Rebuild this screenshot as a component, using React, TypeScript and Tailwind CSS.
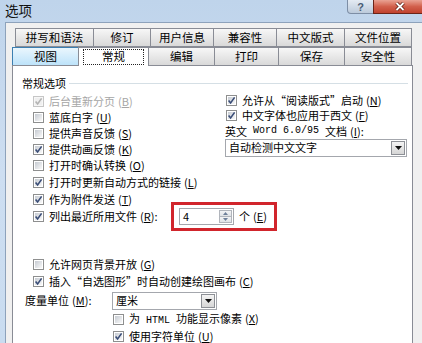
import React from "react";

function Box({ checked, disabled }: { checked?: boolean; disabled?: boolean }) {
  return (
    <span
      className={`relative block h-[11px] w-[11px] shrink-0 border p-px ${
        disabled ? "border-[#c6c6c6] bg-[#f7f7f7]" : "border-[#8e8f8f] bg-white"
      }`}
    >
      <span
        className={`block h-full w-full ${
          disabled ? "bg-[#efefef]" : "bg-gradient-to-br from-[#c6cbd2] to-[#f9f9f9]"
        }`}
      />
      {checked && (
        <svg className="absolute left-0 top-0" width="9" height="9" viewBox="0 0 9 9">
          <path
            d="M1.6 4.4 L3.6 6.9 L7.6 1.4"
            fill="none"
            stroke={disabled ? "#b3b3b3" : "#3a4d77"}
            strokeWidth="1.6"
          />
        </svg>
      )}
    </span>
  );
}

function Hot({ k }: { k: string }) {
  return (
    <span className="ml-[3px]">
      (<span className="underline underline-offset-[1px]">{k}</span>)
    </span>
  );
}

function Check({
  children,
  hot,
  checked,
  disabled,
  h = "h-[17px]",
}: {
  children: React.ReactNode;
  hot: string;
  checked?: boolean;
  disabled?: boolean;
  h?: string;
}) {
  return (
    <div className={`flex items-center gap-[5px] whitespace-nowrap ${h}`}>
      <Box checked={checked} disabled={disabled} />
      <span className={disabled ? "text-[#a6a6a6]" : "text-black"}>
        {children}
        <Hot k={hot} />
      </span>
    </div>
  );
}

function Tab({
  label,
  w,
  first,
  state,
  front,
}: {
  label: string;
  w: string;
  first?: boolean;
  state?: "hover" | "selected";
  front?: boolean;
}) {
  let look = "border border-[#898c95] bg-gradient-to-b from-[#f7f7f7] to-[#d9d9d9]";
  if (state === "hover")
    look = "relative z-10 border border-[#3c7fb1] bg-gradient-to-b from-[#eaf6fd] to-[#bde3fa]";
  if (state === "selected")
    look = "relative z-20 border border-b-0 border-[#898c95] bg-white h-[19px] -mb-px";
  return (
    <div
      className={`flex items-center justify-center text-[11.5px] text-black ${w} ${
        first ? "" : "-ml-px"
      } ${front ? "h-[18px] border-b-0" : "h-[19px]"} ${look}`}
    >
      {state === "selected" && (
        <span className="absolute inset-x-[4px] top-[1px] bottom-[1px] border border-dotted border-[#222]" />
      )}
      <span className="relative">{label}</span>
    </div>
  );
}

function Combo({ w, text }: { w: string; text: string }) {
  return (
    <div className={`flex h-[18px] items-center border border-[#a4a7ad] bg-white ${w}`}>
      <span className="flex-1 pl-[3px] text-black">{text}</span>
      <span className="mr-px flex h-[14px] w-[14px] items-center justify-center border border-[#8d9096] bg-gradient-to-b from-[#f4f4f4] to-[#d6d6d6]">
        <svg width="7" height="4" viewBox="0 0 7 4">
          <path d="M0 0 H7 L3.5 4 Z" fill="#111" />
        </svg>
      </span>
    </div>
  );
}

export default function App() {
  return (
    <div className="relative flex h-[343px] w-[422px] flex-col overflow-hidden bg-gradient-to-b from-[#bfd4eb] via-[#cddef1] to-[#c9dcf0] font-['Noto_Sans_CJK_SC','Noto_Sans',sans-serif] text-[11px] leading-none">
      {/* title bar */}
      <div className="flex h-[22px] shrink-0 items-start justify-between">
        <span className="pl-[5px] pt-[4px] text-[13.5px] text-[#111]">选项</span>
        <div className="-mr-[4px] flex">
          <div className="flex h-[14px] w-[27px] items-start justify-center rounded-bl-[4px] border border-t-0 border-[#7d8ea5] bg-gradient-to-b from-[#e4ebf3] to-[#bccadb] pt-px font-['Liberation_Sans',sans-serif] text-[11px] leading-[12px] font-bold text-[#4a5c74]">
            ?
          </div>
          <div className="-ml-px flex h-[14px] w-[53px] items-center justify-center rounded-br-[4px] border border-t-0 border-[#6b2418] bg-gradient-to-b from-[#e9a293] via-[#d2604c] to-[#c0412d]">
            <svg width="10" height="9" viewBox="0 0 10 9">
              <path d="M1.5 1 L8.5 8 M8.5 1 L1.5 8" stroke="#5a1a10" strokeWidth="3.4" />
              <path d="M1.5 1 L8.5 8 M8.5 1 L1.5 8" stroke="#ffffff" strokeWidth="1.8" />
            </svg>
          </div>
        </div>
      </div>

      {/* client */}
      <div className="ml-[5px] flex flex-1 flex-col border-l border-t border-[#8da2bb] bg-[#f0f0f0]">
        {/* tab rows */}
        <div className="mt-[5px] flex pl-[9px]">
          <Tab first label="拼写和语法" w="w-[79px]" />
          <Tab label="修订" w="w-[58px]" />
          <Tab label="用户信息" w="w-[64px]" />
          <Tab label="兼容性" w="w-[64px]" />
          <Tab label="中文版式" w="w-[69px]" />
          <Tab label="文件位置" w="w-[68px]" />
        </div>
        <div className="flex h-[18px] items-start pl-[6px]">
          <Tab front first label="视图" w="w-[67px]" state="hover" />
          <Tab front label="常规" w="w-[71px]" state="selected" />
          <Tab front label="编辑" w="w-[67px]" />
          <Tab front label="打印" w="w-[65px]" />
          <Tab front label="保存" w="w-[67px]" />
          <Tab front label="安全性" w="w-[68px]" />
        </div>

        {/* panel */}
        <div className="ml-[6px] w-[401px] flex-1 border border-[#898c95] bg-white">
          <div className="mt-[10px] flex h-[14px] items-center pl-[9px] pr-[4px]">
            <span className="text-black">常规选项</span>
            <span className="ml-[3px] h-px flex-1 bg-[#d5dfe5]" />
          </div>

          <div className="mt-[3px] pl-[20px]">
            <div className="flex h-[64px]">
              <div className="w-[193px]">
                <Check h="h-[16px]" hot="B" checked disabled>后台重新分页</Check>
                <Check h="h-[16px]" hot="U">蓝底白字</Check>
                <Check h="h-[16px]" hot="S">提供声音反馈</Check>
                <Check h="h-[16px]" hot="K" checked>提供动画反馈</Check>
              </div>
              <div className="flex flex-col">
                <Check h="h-[16px]" hot="N" checked>允许从“阅读版式”启动</Check>
                <Check h="h-[16px]" hot="F" checked>中文字体也应用于西文</Check>
                <div className="-ml-px flex h-[17px] items-center whitespace-pre text-black">
                  英文<span className="font-['Liberation_Mono',monospace] text-[10px]"> Word 6.0/95 </span>文档
                  <Hot k="I" />:
                </div>
                <div className="-ml-px">
                  <Combo w="w-[182px]" text="自动检测中文文字" />
                </div>
              </div>
            </div>

            <Check hot="O">打开时确认转换</Check>
            <Check hot="L" checked>打开时更新自动方式的链接</Check>
            <Check hot="T" checked>作为附件发送</Check>
            <div className="flex h-[17px] items-center gap-[5px] whitespace-nowrap">
              <Box checked />
              <span className="w-[125px] text-black">
                列出最近所用文件
                <Hot k="R" />:
              </span>
              <div className="relative flex items-center">
                <div className="absolute -left-[8px] -top-[6px] h-[29px] w-[106px] border-[3px] border-[#d1252c]" />
                <div className="relative flex h-[17px] w-[55px] items-center border border-[#a4a7ad] bg-white pl-[3px] text-black">
                  4
                  <div className="absolute bottom-px right-px top-px flex w-[13px] flex-col">
                    <span className="flex flex-1 items-center justify-center border border-[#b1b5bc] bg-gradient-to-b from-[#f3f4f6] to-[#dfe2e6]">
                      <svg width="5" height="3" viewBox="0 0 5 3">
                        <path d="M0 3 L2.5 0 L5 3 Z" fill="#6d7f99" />
                      </svg>
                    </span>
                    <span className="-mt-px flex flex-1 items-center justify-center border border-[#b1b5bc] bg-gradient-to-b from-[#f3f4f6] to-[#dfe2e6]">
                      <svg width="5" height="3" viewBox="0 0 5 3">
                        <path d="M0 0 L5 0 L2.5 3 Z" fill="#6d7f99" />
                      </svg>
                    </span>
                  </div>
                </div>
                <span className="ml-[5px] text-black">
                  个<Hot k="E" />
                </span>
              </div>
            </div>

            <div className="mt-[31px]">
              <Check hot="G">允许网页背景开放</Check>
              <Check hot="C" checked>插入“自选图形”时自动创建绘图画布</Check>
              <div className="-ml-[8px] flex h-[21px] items-center">
                <span className="w-[87px] whitespace-nowrap text-black">
                  度量单位
                  <Hot k="M" />:
                </span>
                <Combo w="w-[105px]" text="厘米" />
              </div>
              <div className="ml-[80px]">
                <Check hot="X">
                  为<span className="font-['Liberation_Mono',monospace] text-[10px] whitespace-pre"> HTML </span>功能显示像素
                </Check>
                <Check hot="U" checked>使用字符单位</Check>
              </div>
            </div>
          </div>
        </div>
      </div>
    </div>
  );
}
